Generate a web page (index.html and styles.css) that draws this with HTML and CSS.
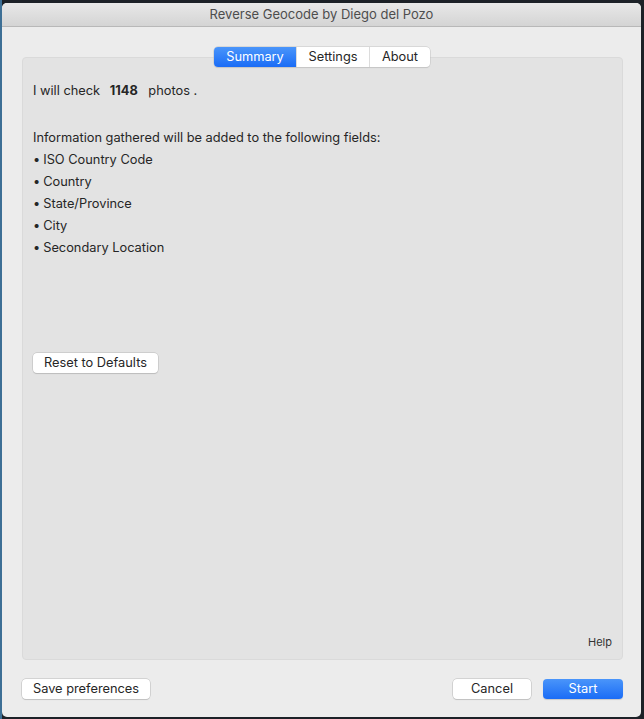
FILE: index.html
```html
<!DOCTYPE html>
<html lang="en">
<head>
    <meta charset="UTF-8">
    <title>Reverse Geocode by Diego del Pozo</title>
    <link rel="stylesheet" href="styles.css">
</head>
<body>
    <div class="window">
        <div class="titlebar">Reverse Geocode by Diego del Pozo</div>
        <div class="content">
            <div class="tabs">
                <span class="tab active">Summary</span>
                <span class="tab">Settings</span>
                <span class="tab">About</span>
            </div>
            <div class="panel">
                <p class="count">I will check <b>1148</b> photos .</p>
                <p class="intro">Information gathered will be added to the following fields:</p>
                <ul class="fields">
                    <li>ISO Country Code</li>
                    <li>Country</li>
                    <li>State/Province</li>
                    <li>City</li>
                    <li>Secondary Location</li>
                </ul>
                <button class="btn reset">Reset to Defaults</button>
                <div class="help">Help</div>
            </div>
            <div class="footer">
                <button class="btn save">Save preferences</button>
                <div class="actions">
                    <button class="btn cancel">Cancel</button>
                    <button class="btn primary">Start</button>
                </div>
            </div>
        </div>
    </div>
</body>
</html>
```

FILE: styles.css
```css
html, body {
    margin: 0;
    padding: 0;
    height: 100%;
}

body {
    font-family: Inter, "Noto Sans", sans-serif;
    font-size: 12.8px;
    color: #262626;
    background: linear-gradient(to right, #3d6f95 0, #3d6f95 2px, #1c2127 2px, #1c2127 100%);
    padding: 3px 3px 2px 2px;
    box-sizing: border-box;
    overflow: hidden;
}

.window {
    height: 714px;
    background: #ececec;
    border-radius: 5px;
    display: flex;
    flex-direction: column;
    overflow: hidden;
}

.titlebar {
    height: 23px;
    line-height: 23px;
    text-align: center;
    color: #4d4d4d;
    font-size: 13px;
    background: linear-gradient(#e8e8e8, #d4d4d4);
    border-bottom: 1px solid #b8b8b8;
}

.content {
    flex: 1;
    display: flex;
    flex-direction: column;
    padding: 20px 18px 18px 20px;
}

.tabs {
    align-self: center;
    display: flex;
    height: 20px;
    margin-left: -1px;
    background: #fff;
    border-radius: 4px;
    box-shadow: 0 0 0 0.5px #c4c4c4, 0 1px 1px rgba(0,0,0,0.12);
    position: relative;
    z-index: 1;
}

.tab {
    line-height: 20px;
    padding: 0 11px;
    border-left: 1px solid #dcdcdc;
    color: #262626;
    text-align: center;
}

.tab:first-child {
    border-left: none;
}

.tab.active {
    width: 60px;
    color: #fff;
    background: linear-gradient(#4a95fa, #1a6cf6);
    border-radius: 4px 0 0 4px;
}

.tabs .tab:nth-child(2) {
    width: 50px;
}

.tabs .tab:nth-child(3) {
    width: 38px;
}

.panel {
    flex: 1;
    margin-top: -10px;
    background: #e3e3e3;
    border: 1px solid #dadada;
    border-radius: 4px;
    padding: 22px 10px 10px 10px;
    display: flex;
    flex-direction: column;
    align-items: flex-start;
}

.panel p {
    margin: 0;
    line-height: 22px;
}

.count b {
    margin: 0 7px 0 6px;
}

.intro {
    margin-top: 25px !important;
}

.fields {
    list-style: none;
    margin: 0;
    padding: 0;
}

.fields li {
    line-height: 22px;
}

.fields li::before {
    content: "\2022";
    margin-right: 3px;
}

.btn {
    font-family: inherit;
    font-size: 12.8px;
    color: #262626;
    background: #fff;
    border: none;
    border-radius: 4px;
    box-shadow: 0 0 0 0.5px #b9b9b9, 0 1px 1px rgba(0,0,0,0.15);
    height: 20px;
    padding: 0 10px;
    line-height: 20px;
}

.reset {
    margin-top: 94px;
    width: 125px;
}

.help {
    margin-top: auto;
    align-self: flex-end;
    font-size: 11px;
    color: #333;
}

.footer {
    display: flex;
    justify-content: space-between;
    margin-top: 19px;
}

.save {
    width: 128px;
}

.actions {
    display: flex;
    gap: 12px;
}

.cancel {
    width: 78px;
}

.primary {
    width: 80px;
    color: #fff;
    background: linear-gradient(#4a95fa, #1a6cf6);
    box-shadow: 0 1px 1px rgba(0,0,0,0.15);
}
```
